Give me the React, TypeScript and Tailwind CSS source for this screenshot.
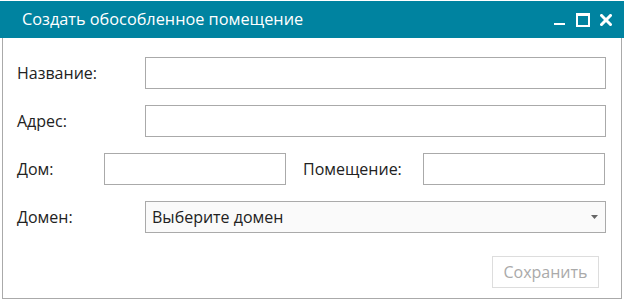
import React from 'react';

const font = { fontFamily: '"Open Sans", "Noto Sans", sans-serif' };

const TextInput: React.FC<{ className?: string }> = ({ className = '' }) => (
  <input type="text" className={`h-8 border border-[#aaaaaa] bg-white px-2 text-sm outline-none ${className}`} />
);

const WindowButtons: React.FC = () => (
  <div className="flex items-center gap-[10px] pr-3">
    <svg width="12" height="14" viewBox="0 0 12 14">
      <rect x="0" y="10" width="11" height="2" fill="#fff" />
    </svg>
    <svg width="14" height="14" viewBox="0 0 14 14">
      <rect x="1" y="1" width="12" height="12" fill="none" stroke="#fff" strokeWidth="2" />
      <rect x="1" y="1" width="12" height="2" fill="#fff" />
    </svg>
    <svg width="12" height="12" viewBox="0 0 12 12">
      <path d="M1.5 1.5 L10.5 10.5 M10.5 1.5 L1.5 10.5" stroke="#fff" strokeWidth="3" strokeLinecap="square" />
    </svg>
  </div>
);

const App: React.FC = () => {
  return (
    <div className="w-[624px] h-[303px] bg-white overflow-hidden" style={font}>
      <div className="mt-px">
        <div className="h-[37px] bg-[#0083a0] flex items-center justify-between">
          <span className="pl-[22px] text-[16.3px] text-white">Создать обособленное помещение</span>
          <WindowButtons />
        </div>
        <div className="mx-[2px] w-[620px] border-x border-b border-[#aaaaaa] pt-[19px] pl-[14px] pr-[15px] pb-[10px] text-[16px] text-[#222]">
          <div className="flex flex-col gap-4">
            <div className="flex items-center">
              <label className="w-[128px]">Название:</label>
              <TextInput className="flex-1" />
            </div>
            <div className="flex items-center">
              <label className="w-[128px]">Адрес:</label>
              <TextInput className="flex-1" />
            </div>
            <div className="flex items-center">
              <label className="w-[87px]">Дом:</label>
              <TextInput className="w-[182px]" />
              <label className="ml-[17px] w-[120px]">Помещение:</label>
              <TextInput className="w-[182px]" />
            </div>
            <div className="flex items-center">
              <label className="w-[128px]">Домен:</label>
              <div className="flex-1 h-8 border border-[#aaaaaa] bg-[#fafafa] flex items-center justify-between pl-[6px] pr-[7px]">
                <span>Выберите домен</span>
                <svg width="7" height="4" viewBox="0 0 7 4">
                  <path d="M0 0 H7 L3.5 4 Z" fill="#666" />
                </svg>
              </div>
            </div>
          </div>
          <div className="flex justify-end mt-[23px] pr-[7px]">
            <button className="w-[107px] h-8 border border-[#dddddd] bg-white text-[#aaaaaa] text-[16px]">Сохранить</button>
          </div>
        </div>
      </div>
    </div>
  );
};

export default App;
